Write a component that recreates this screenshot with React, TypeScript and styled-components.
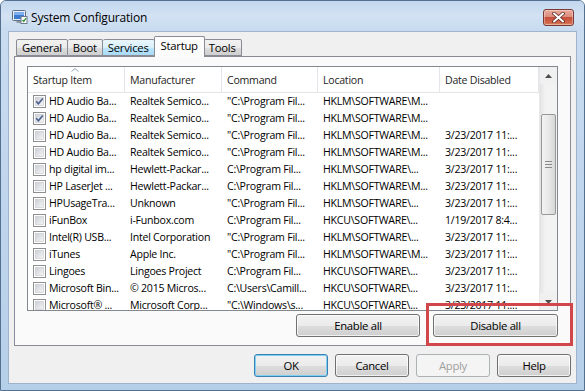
import React from "react";
import styled, { createGlobalStyle } from "styled-components";

const GlobalStyle = createGlobalStyle`
  html, body {
    margin: 0;
    padding: 0;
    overflow: hidden;
    background: #ffffff;
  }
  body {
    font-family: "Open Sans", "Noto Sans", sans-serif;
    font-size: 10.6px;
    letter-spacing: -0.25px;
    color: #000;
  }
`;

type Row = {
  checked: boolean;
  item: string;
  maker: string;
  command: string;
  location: string;
  date: string;
};

const rows: Row[] = [
  { checked: true, item: "HD Audio Ba...", maker: "Realtek Semico...", command: "\"C:\\Program Fil...", location: "HKLM\\SOFTWARE\\M...", date: "" },
  { checked: true, item: "HD Audio Ba...", maker: "Realtek Semico...", command: "\"C:\\Program Fil...", location: "HKLM\\SOFTWARE\\M...", date: "" },
  { checked: false, item: "HD Audio Ba...", maker: "Realtek Semico...", command: "\"C:\\Program Fil...", location: "HKLM\\SOFTWARE\\M...", date: "3/23/2017 11:..." },
  { checked: false, item: "HD Audio Ba...", maker: "Realtek Semico...", command: "\"C:\\Program Fil...", location: "HKLM\\SOFTWARE\\M...", date: "3/23/2017 11:..." },
  { checked: false, item: "hp digital im...", maker: "Hewlett-Packar...", command: "C:\\Program Fil...", location: "HKLM\\SOFTWARE\\...", date: "3/23/2017 11:..." },
  { checked: false, item: "HP LaserJet ...", maker: "Hewlett-Packar...", command: "C:\\Program Fil...", location: "HKLM\\SOFTWARE\\M...", date: "3/23/2017 11:..." },
  { checked: false, item: "HPUsageTra...", maker: "Unknown", command: "\"C:\\Program Fil...", location: "HKLM\\SOFTWARE\\...", date: "3/23/2017 11:..." },
  { checked: false, item: "iFunBox", maker: "i-Funbox.com", command: "C:\\Program Fil...", location: "HKCU\\SOFTWARE\\...", date: "1/19/2017 8:4..." },
  { checked: false, item: "Intel(R) USB...", maker: "Intel Corporation", command: "\"C:\\Program Fil...", location: "HKLM\\SOFTWARE\\...", date: "3/23/2017 11:..." },
  { checked: false, item: "iTunes", maker: "Apple Inc.", command: "\"C:\\Program Fil...", location: "HKLM\\SOFTWARE\\M...", date: "3/23/2017 11:..." },
  { checked: false, item: "Lingoes", maker: "Lingoes Project", command: "C:\\Program Fil...", location: "HKCU\\SOFTWARE\\...", date: "3/23/2017 11:..." },
  { checked: false, item: "Microsoft Bin...", maker: "\u00a9 2015 Micros...", command: "C:\\Users\\Camill...", location: "HKCU\\SOFTWARE\\...", date: "3/23/2017 11:..." },
  { checked: false, item: "Microsoft\u00ae ...", maker: "Microsoft Corp...", command: "\"C:\\Windows\\s...", location: "HKCU\\SOFTWARE\\...", date: "3/23/2017 11:..." },
];

const tabs = ["General", "Boot", "Services", "Startup", "Tools"];

export default function App() {
  return (
    <>
      <GlobalStyle />
      <Window>
        <TitleBar>
          <AppIcon />
          <Title>System Configuration</Title>
          <CloseButton>
            <svg width="13" height="11" viewBox="0 0 13 11">
              <path d="M2 1.5 L11 9.5 M11 1.5 L2 9.5" stroke="#5a2a22" strokeWidth="3.6" strokeLinecap="round" />
              <path d="M2 1.5 L11 9.5 M11 1.5 L2 9.5" stroke="#ffffff" strokeWidth="2" strokeLinecap="round" />
            </svg>
          </CloseButton>
        </TitleBar>
        <Client>
          <TabStrip>
            {tabs.map((t) => (
              <Tab key={t} $selected={t === "Startup"} $hover={t === "Services"}>
                {t}
              </Tab>
            ))}
          </TabStrip>
          <TabPanel>
            <ListView>
              <ListContent>
                <HeaderRow>
                  <HeaderCell>
                    <SortArrow width="8" height="4" viewBox="0 0 8 4">
                      <path d="M0.5 3.5 L4 0.5 L7.5 3.5" stroke="#97a5b8" strokeWidth="1" fill="none" />
                    </SortArrow>
                    Startup Item
                  </HeaderCell>
                  <HeaderCell>Manufacturer</HeaderCell>
                  <HeaderCell>Command</HeaderCell>
                  <HeaderCell>Location</HeaderCell>
                  <HeaderCell>Date Disabled</HeaderCell>
                </HeaderRow>
                {rows.map((r, i) => (
                  <ItemRow key={i}>
                    <ItemCell>
                      <CheckBox checked={r.checked} />
                      {r.item}
                    </ItemCell>
                    <ItemCell>{r.maker}</ItemCell>
                    <ItemCell>{r.command}</ItemCell>
                    <ItemCell>{r.location}</ItemCell>
                    <ItemCell>{r.date}</ItemCell>
                  </ItemRow>
                ))}
              </ListContent>
              <ScrollBar>
                <ScrollArrow>
                  <svg width="7" height="4" viewBox="0 0 7 4">
                    <path d="M0 4 L3.5 0 L7 4 Z" fill="#4d4d4d" />
                  </svg>
                </ScrollArrow>
                <ScrollTrack>
                  <ScrollThumb>
                    <Grip />
                  </ScrollThumb>
                </ScrollTrack>
                <ScrollArrow>
                  <svg width="7" height="4" viewBox="0 0 7 4">
                    <path d="M0 0 L3.5 4 L7 0 Z" fill="#4d4d4d" />
                  </svg>
                </ScrollArrow>
              </ScrollBar>
            </ListView>
            <PanelActions>
              <PushButton $width={124}>Enable all</PushButton>
              <Highlighted>
                <PushButton $width={125}>Disable all</PushButton>
              </Highlighted>
            </PanelActions>
          </TabPanel>
          <DialogActions>
            <PushButton $width={74} $default>OK</PushButton>
            <PushButton $width={74}>Cancel</PushButton>
            <PushButton $width={74} disabled>Apply</PushButton>
            <PushButton $width={74}>Help</PushButton>
          </DialogActions>
        </Client>
      </Window>
    </>
  );
}

function AppIcon() {
  return (
    <IconBox>
      <svg width="16" height="16" viewBox="0 0 16 16">
        <rect x="0.5" y="1.5" width="13" height="10" rx="1" fill="#e8eef6" stroke="#5f6f84" />
        <rect x="2" y="3" width="10" height="7" fill="#3d7bd0" />
        <rect x="2" y="3" width="10" height="3" fill="#7fb0ee" />
        <rect x="4.5" y="12" width="5" height="2" fill="#8e98a6" />
        <rect x="9" y="7.5" width="6" height="7" fill="#ffffff" stroke="#6c7a8c" />
        <path d="M10.5 11 L11.8 12.5 L14 9" stroke="#2f8a2f" strokeWidth="1.3" fill="none" />
      </svg>
    </IconBox>
  );
}

function CheckBox({ checked }: { checked: boolean }) {
  return (
    <CheckWrap>
      <svg width="13" height="13" viewBox="0 0 13 13">
        <defs>
          <linearGradient id="cbfill" x1="0" y1="0" x2="1" y2="1">
            <stop offset="0" stopColor="#cbcfd5" />
            <stop offset="1" stopColor="#f6f6f6" />
          </linearGradient>
        </defs>
        <rect x="0.5" y="0.5" width="12" height="12" fill="#ffffff" stroke="#8f8f8f" />
        <rect x="2.5" y="2.5" width="8" height="8" fill="url(#cbfill)" stroke="#c2c6cc" strokeWidth="0.6" />
        {checked && (
          <path d="M3.2 6.2 L5.4 8.8 L9.8 3.4" stroke="#4a5f8f" strokeWidth="1.6" fill="none" />
        )}
      </svg>
    </CheckWrap>
  );
}

const Window = styled.div`
  width: 585px;
  height: 391px;
  box-sizing: border-box;
  display: flex;
  flex-direction: column;
  border: 1px solid #54708f;
  border-radius: 6px 6px 0 0;
  background: linear-gradient(180deg, #bcd2ea 0%, #c9dcf0 8%, #c2d7ee 40%, #b6cfe9 100%);
  overflow: hidden;
`;

const TitleBar = styled.div`
  height: 31px;
  display: flex;
  align-items: center;
  padding: 0 10px 0 11px;
  background: linear-gradient(180deg, #c2d7ee 0%, #d3e2f3 50%, #c6daef 100%);
`;

const IconBox = styled.div`
  width: 16px;
  height: 16px;
  margin-top: 2px;
  margin-right: 3px;
`;

const Title = styled.div`
  font-size: 12px;
  letter-spacing: -0.2px;
  margin-top: 3px;
  color: #000;
`;

const CloseButton = styled.div`
  margin-left: auto;
  margin-top: 2px;
  width: 31px;
  height: 17px;
  box-sizing: border-box;
  border: 1px solid #7a3a34;
  border-radius: 3px;
  display: flex;
  align-items: center;
  justify-content: center;
  background: linear-gradient(180deg, #e9a99b 0%, #dc8e7e 45%, #c7503c 50%, #d26448 85%, #dd8d6d 100%);
  box-shadow: inset 0 0 0 1px rgba(255, 255, 255, 0.35);
`;

const Client = styled.div`
  flex: 1;
  margin: 0 7px 6px 7px;
  border: 1px solid #9fb4cc;
  background: #f0f0f0;
  display: flex;
  flex-direction: column;
  padding: 5px 5px 6px 5px;
`;

const TabStrip = styled.div`
  display: flex;
  align-items: flex-end;
  padding-left: 2px;
  height: 19px;
  position: relative;
  z-index: 1;
`;

const Tab = styled.div<{ $selected?: boolean; $hover?: boolean }>`
  box-sizing: border-box;
  height: ${(p) => (p.$selected ? "21px" : "17px")};
  margin-bottom: ${(p) => (p.$selected ? "-1px" : "0")};
  margin-left: ${(p) => (p.$selected ? "-1px" : "0")};
  margin-right: ${(p) => (p.$selected ? "-1px" : "0")};
  padding: ${(p) => (p.$selected ? "1px 6px 0 6px" : "0 5px")};
  display: flex;
  align-items: ${(p) => (p.$selected ? "flex-start" : "center")};
  border: 1px solid #898c95;
  border-bottom: ${(p) => (p.$selected ? "none" : "1px solid #898c95")};
  border-left: ${(p) => (p.$selected ? "1px solid #898c95" : "none")};
  &:first-child {
    border-left: 1px solid #898c95;
  }
  border-radius: 2px 2px 0 0;
  background: ${(p) =>
    p.$selected
      ? "#fcfcfc"
      : p.$hover
      ? "linear-gradient(180deg, #eaf6fd 0%, #d9f0fc 50%, #bee6fd 51%, #a7d9f5 100%)"
      : "linear-gradient(180deg, #f2f2f2 0%, #ebebeb 50%, #dddddd 51%, #cfcfcf 100%)"};
  font-size: 11.3px;
  line-height: 15px;
  position: relative;
  z-index: ${(p) => (p.$selected ? 2 : 1)};
`;

const TabPanel = styled.div`
  height: 290px;
  box-sizing: border-box;
  border: 1px solid #898c95;
  background: #fafafa;
  display: flex;
  flex-direction: column;
  padding: 9px 12px 8px 12px;
`;

const ListView = styled.div`
  height: 245px;
  box-sizing: border-box;
  border: 1px solid #828790;
  background: #ffffff;
  display: flex;
  overflow: hidden;
`;

const ListContent = styled.div`
  flex: 1;
  overflow: hidden;
`;

const columns = "97px 97px 96px 122px 1fr";

const HeaderRow = styled.div`
  display: grid;
  grid-template-columns: ${columns};
  height: 25px;
  border-bottom: 1px solid #e5e5e5;
  background: #ffffff;
`;

const HeaderCell = styled.div`
  position: relative;
  display: flex;
  align-items: center;
  padding-left: 5px;
  border-right: 1px solid #e3e6ea;
  white-space: nowrap;
  overflow: hidden;
  color: #1e1e1e;
`;

const SortArrow = styled.svg`
  position: absolute;
  top: 1px;
  left: 43px;
`;

const ItemRow = styled.div`
  display: grid;
  grid-template-columns: ${columns};
  height: 17px;
  align-items: center;
`;

const ItemCell = styled.div`
  display: flex;
  align-items: center;
  padding-left: 5px;
  white-space: nowrap;
  overflow: hidden;
  line-height: 17px;
`;

const CheckWrap = styled.span`
  width: 13px;
  height: 13px;
  margin-right: 3px;
  display: inline-flex;
  flex: none;
`;

const ScrollBar = styled.div`
  width: 17px;
  display: flex;
  flex-direction: column;
  background: #f0f0f0;
  border-left: 1px solid #e8e8e8;
`;

const ScrollArrow = styled.div`
  height: 17px;
  display: flex;
  align-items: center;
  justify-content: center;
`;

const ScrollTrack = styled.div`
  flex: 1;
  padding-top: 30px;
  background: linear-gradient(90deg, #e3e3e3 0%, #f2f2f2 30%, #f2f2f2 100%);
`;

const ScrollThumb = styled.div`
  height: 101px;
  margin: 0 1px;
  box-sizing: border-box;
  border: 1px solid #979797;
  border-radius: 2px;
  background: linear-gradient(90deg, #f3f3f3 0%, #e8e8e8 50%, #d6d6d6 100%);
  display: flex;
  align-items: center;
  justify-content: center;
`;

const Grip = styled.div`
  width: 7px;
  height: 7px;
  background: repeating-linear-gradient(180deg, #8a8a8a 0 1px, transparent 1px 3px);
`;

const PanelActions = styled.div`
  display: flex;
  justify-content: flex-end;
  gap: 13px;
  margin-top: 3px;
`;

const Highlighted = styled.div`
  position: relative;
  &::after {
    content: "";
    position: absolute;
    top: -11px;
    left: -7px;
    right: -15px;
    bottom: -9px;
    border: 3px solid #d1464a;
    pointer-events: none;
  }
`;

const PushButton = styled.button<{ $width: number; $default?: boolean }>`
  width: ${(p) => p.$width}px;
  height: 23px;
  box-sizing: border-box;
  border: 1px solid ${(p) => (p.$default ? "#3c7fb1" : "#707070")};
  border-radius: 3px;
  padding: 0;
  font-family: inherit;
  font-size: 11.3px;
  letter-spacing: -0.3px;
  color: #000;
  background: linear-gradient(180deg, #f2f2f2 0%, #ebebeb 50%, #dddddd 51%, #cfcfcf 100%);
  box-shadow: ${(p) =>
    p.$default ? "inset 0 0 0 1px #7ed0f5" : "inset 0 0 0 1px rgba(255, 255, 255, 0.7)"};
  &:disabled {
    color: #a0a0a0;
    border-color: #adb2b5;
    background: #f4f4f4;
    box-shadow: none;
  }
`;

const DialogActions = styled.div`
  display: flex;
  justify-content: flex-end;
  gap: 7px;
  margin-top: 8px;
`;
